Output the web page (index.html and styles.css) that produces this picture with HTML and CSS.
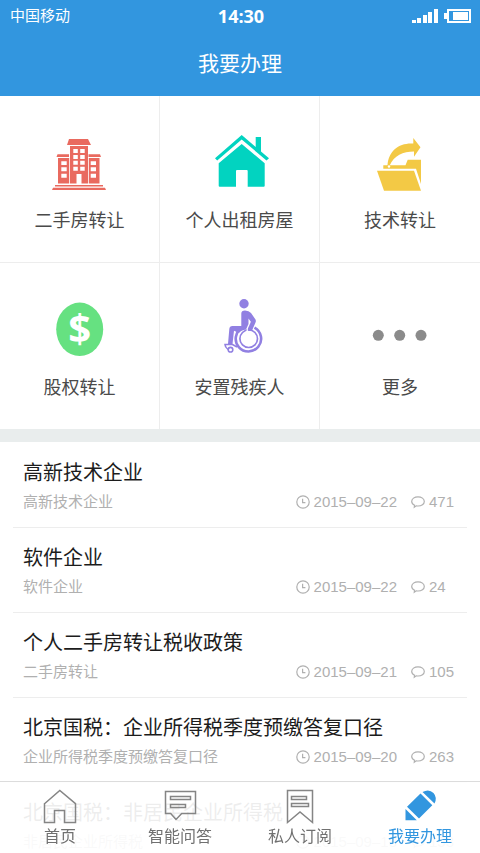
FILE: index.html
```html
<!DOCTYPE html>
<html lang="zh-CN">
<head>
<meta charset="utf-8">
<meta name="viewport" content="width=device-width, initial-scale=1">
<title>我要办理</title>
<link rel="stylesheet" href="styles.css">
</head>
<body>
<svg class="sprite" aria-hidden="true">
  <symbol id="clock" viewBox="0 0 14 14"><circle cx="7" cy="7" r="6.2"/><path d="M6.6 3.8V7.6H9.4"/></symbol>
  <symbol id="comment" viewBox="0 0 14 14"><path d="M3.6 10.2C1.8 9.4.7 8 .7 6.4.7 3.8 3.5 1.8 7 1.8s6.3 2 6.3 4.6S10.500 11 7 11c-.6 0-1.200-.1-1.700-.2L3.300 12.200Z"/></symbol>
</svg>
<header class="header">
  <div class="status">
    <span class="carrier">中国移动</span>
    <span class="time">14:30</span>
    <svg class="signal" viewBox="0 0 60 16" role="img" aria-label="信号与电量">
      <path fill="#fff" d="M0 12h4v3H0zM5 10h4v5H5zM11 7h4v8h-4zM16 4h4v11h-4zM22 1h4v14h-4z"/>
      <rect x="36" y="2" width="22" height="12" fill="none" stroke="#fff" stroke-width="2"/>
      <path fill="#fff" d="M32 5h3v6h-3zM41 4h15v8H41z"/>
    </svg>
  </div>
  <h1 class="page-title">我要办理</h1>
</header>
<main class="content">
  <nav class="services" aria-label="办理事项">
    <a class="service" href="#house-sale">
      <svg class="service-icon" viewBox="0 0 60 60" fill="#e96a5f">
        <path d="M19 5h19l3 6H17zM7.500 20.300H19V23H6.500zM38.500 20.300H50L51 23H38.500zM5 51h48v1.500H5zM3 53.800h52l1 2.200H2z"/>
        <path fill-rule="evenodd" d="M20 12h18v37.500h-6.500V40h-5v9.500H20zM23.300 15v4h4.500v-4zM30.200 15v4h4.500v-4zM23.300 21v4h4.500v-4zM30.200 21v4h4.500v-4zM23.300 26.700v4h4.500v-4zM30.200 26.700v4h4.500v-4zM23.300 32.700v4h4.500v-4zM30.200 32.700v4h4.500v-4zM8 24h11.200v25.500H8zM11.300 27.300V31h5.400v-3.700zM11.300 33.300v4h5.400v-4zM11.300 39.700v4h5.400v-4zM38.800 24h10.700v25.500H38.800zM40.700 27.300V31H46v-3.700zM40.700 33.300v4H46v-4zM40.700 39.700v4H46v-4z"/>
      </svg>
      <span>二手房转让</span>
    </a>
    <a class="service" href="#house-rent">
      <svg class="service-icon" viewBox="0 0 60 60" fill="#02d3c0">
        <path d="M5 24.300 31.700 1 45.700 13V3H51V17.500L59 24.300 56.500 26.500 31.700 5.500 7.200 26.500Z"/>
        <path d="M8.700 29.300 31.700 10 54.700 29.300V51.700q0 1-1 1H37.700V37q0-1-1-1H27q-1 0-1 1V52.700H9.700q-1 0-1-1Z"/>
      </svg>
      <span>个人出租房屋</span>
    </a>
    <a class="service" href="#technology">
      <svg class="service-icon" viewBox="0 0 60 60" fill="#f3c945">
        <path d="M7 36.700H44L51 56.700H14Z"/>
        <path d="M13.300 34.800V31.300H17.500C18.500 17 29 8.500 43.300 9.500V4L50.500 13.300 44 22.700V17.500C33 17.500 24 21.500 19.800 31.300H35.500L37.700 25.700H51V50L46 34.800Z"/>
        <circle cx="19" cy="32.500" r="1.200" fill="#fff"/>
      </svg>
      <span>技术转让</span>
    </a>
    <a class="service" href="#equity">
      <svg class="service-icon" viewBox="0 0 60 60">
        <ellipse cx="29.700" cy="28.300" rx="23.500" ry="26.700" fill="#66e181"/>
        <text class="dollar" x="29.700" y="42" text-anchor="middle">$</text>
      </svg>
      <span>股权转让</span>
    </a>
    <a class="service" href="#disabled">
      <svg class="service-icon" viewBox="0 0 60 60" fill="#9180e2">
        <circle cx="34" cy="2.700" r="4.700"/>
        <path d="M31.300 12.500Q31.300 9.500 35 9.500 39 9.500 41 12L45.500 18.500Q46.200 20 45.500 21.500L42 29.500H37.500L41 21 38.500 17.500V23L36 28.500Q31 29 29 32L24 29.800 22.500 43H18L19.300 28Q19.500 25 22.500 25H31.300Z"/>
        <g fill="none" stroke="#9180e2">
          <path stroke-width="2.600" d="M44.500 26.600A12.700 12.700 0 1 1 32 26.800"/>
          <circle cx="38.700" cy="37.700" r="8.800" stroke-width="1.700"/>
          <circle cx="20.500" cy="48.700" r="2.300" stroke-width="1.600"/>
          <path stroke-width="1.600" d="M18 48.500Q15 46 15 43.500H22.500L27 46"/>
        </g>
        <path fill="none" stroke="#fff" stroke-width="1.300" d="M41.200 21.500 36 32"/>
        <path fill="none" stroke="#9180e2" stroke-width="4" stroke-linecap="round" d="M43 21 39.800 28"/>
      </svg>
      <span>安置残疾人</span>
    </a>
    <a class="service" href="#more">
      <svg class="service-icon" viewBox="0 0 60 60" fill="#8b8b8b"><circle cx="8.300" cy="34.300" r="5.500"/><circle cx="29.700" cy="34.300" r="5.500"/><circle cx="51" cy="34.300" r="5.500"/></svg>
      <span>更多</span>
    </a>
  </nav>
  <ul class="articles">
    <li class="article">
      <h2><a href="#a1">高新技术企业</a></h2>
      <div class="meta"><span class="topic">高新技术企业</span><svg><use href="#clock"/></svg><time>2015–09–22</time><svg class="bubble"><use href="#comment"/></svg><span class="count">471</span></div>
    </li>
    <li class="article">
      <h2><a href="#a2">软件企业</a></h2>
      <div class="meta"><span class="topic">软件企业</span><svg><use href="#clock"/></svg><time>2015–09–22</time><svg class="bubble"><use href="#comment"/></svg><span class="count">24</span></div>
    </li>
    <li class="article">
      <h2><a href="#a3">个人二手房转让税收政策</a></h2>
      <div class="meta"><span class="topic">二手房转让</span><svg><use href="#clock"/></svg><time>2015–09–21</time><svg class="bubble"><use href="#comment"/></svg><span class="count">105</span></div>
    </li>
    <li class="article">
      <h2><a href="#a4">北京国税：企业所得税季度预缴答复口径</a></h2>
      <div class="meta"><span class="topic">企业所得税季度预缴答复口径</span><svg><use href="#clock"/></svg><time>2015–09–20</time><svg class="bubble"><use href="#comment"/></svg><span class="count">263</span></div>
    </li>
    <li class="article">
      <h2><a href="#a5">北京国税：非居民企业所得税</a></h2>
      <div class="meta"><span class="topic">非居民企业所得税</span><svg><use href="#clock"/></svg><time>2015–09–18</time><svg class="bubble"><use href="#comment"/></svg><span class="count">153</span></div>
    </li>
  </ul>
</main>
<nav class="tabs" aria-label="主导航">
  <a class="tab" href="#home">
    <svg viewBox="0 0 40 38"><path d="M4.500 15.700 19.800 2.500 35.500 15.700V34.500H24.500V22.500H14.500V34.500H4.500Z"/></svg>
    <span>首页</span>
  </a>
  <a class="tab" href="#ask">
    <svg viewBox="0 0 40 38"><path d="M5.500 3.500H35.500V25.500H21.700L16 31.500 10.700 25.500H5.500ZM10.500 8.500H30.500V11.500H10.500ZM10.500 16.500H25.500V19.500H10.500Z"/></svg>
    <span>智能问答</span>
  </a>
  <a class="tab" href="#subscriptions">
    <svg viewBox="0 0 40 38"><path d="M7.500 2.500H32.500V34.500L20 24 7.500 34.500ZM11.500 8.500H26.500V11.500H11.500ZM11.500 15.500H28.500V18.500H11.500Z"/></svg>
    <span>私人订阅</span>
  </a>
  <a class="tab active" href="#apply" aria-current="page">
    <svg viewBox="0 0 40 38"><path d="M22.500 4Q29 .5 33.500 5 37.500 9.500 34.500 15.500ZM20.500 5.500 32.300 17.300 19 30.500 7 18.700ZM5.500 21 16.800 32.300H5.500Z"/></svg>
    <span>我要办理</span>
  </a>
</nav>
</body>
</html>
```
FILE: styles.css
```css
* {
  box-sizing: border-box;
}

body {
  display: flex;
  flex-direction: column;
  height: 100vh;
  margin: 0;
  overflow: hidden;
  background: #fff;
  color: #1c1c1c;
  font-family: "Liberation Sans", "Noto Sans CJK SC", sans-serif;
}

a {
  color: inherit;
  text-decoration: none;
}

.sprite {
  display: none;
}

.header {
  flex: none;
  background: #3296df;
  color: #fff;
}

.status {
  display: grid;
  grid-template-columns: 1fr auto 1fr;
  align-items: center;
  height: 32px;
  padding: 0 8px 0 10px;
}

.carrier {
  font-size: 15px;
  line-height: 20px;
}

.time {
  font: bold 18px/20px "Open Sans", sans-serif;
}

.signal {
  justify-self: end;
  width: 60px;
  height: 16px;
}

.page-title {
  margin: 0;
  padding: 17px 0;
  font-size: 21px;
  font-weight: 400;
  line-height: 30px;
  text-align: center;
}

.content {
  flex: 1;
  min-height: 0;
  overflow-y: auto;
  scrollbar-width: none;
}

.services {
  display: grid;
  grid-template-columns: repeat(3, 1fr);
  border-bottom: 13px solid #e9eded;
}

.service {
  display: flex;
  flex-direction: column;
  align-items: center;
  gap: 13px;
  padding: 38px 0 27px;
  border-right: 1px solid #ededed;
  color: #4a4a4a;
  font-size: 18px;
  line-height: 28px;
}

.service:nth-child(3n) {
  border-right: 0;
}

.service:nth-child(-n+3) {
  border-bottom: 1px solid #ededed;
}

.service-icon {
  width: 60px;
  height: 60px;
  overflow: visible;
}

.dollar {
  fill: #fff;
  font: bold 40px "Open Sans", sans-serif;
}

.articles {
  margin: 0;
  padding: 0 13px 72px;
  list-style: none;
}

.article {
  padding: 15px 12px 15px 10px;
  border-bottom: 1px solid #ededed;
}

.article:first-child {
  padding-top: 16px;
}

.article h2 {
  margin: 0 0 4px;
  font-size: 20px;
  font-weight: 400;
  line-height: 30px;
}

.meta {
  display: flex;
  align-items: center;
  color: #b0b0b0;
  font-size: 15px;
  line-height: 20px;
}

.topic {
  flex: 1;
}

.meta svg {
  width: 14px;
  height: 14px;
  margin-right: 4px;
  fill: none;
  stroke: #b0b0b0;
  stroke-width: 1.2px;
}

.meta .bubble {
  margin-left: 14px;
}

.count {
  width: 26px;
}

.tabs {
  position: fixed;
  right: 0;
  bottom: 0;
  left: 0;
  display: grid;
  grid-template-columns: repeat(4, 1fr);
  padding: 6px 0;
  border-top: 1px solid #dcdcdc;
  background: rgba(255, 255, 255, 0.92);
}

.tab {
  display: flex;
  flex-direction: column;
  align-items: center;
  gap: 1px;
  color: #707070;
  font-size: 16px;
  line-height: 20px;
}

.tab svg {
  width: 40px;
  height: 38px;
  fill: none;
  stroke: #858585;
  stroke-width: 1.5px;
}

.tab.active {
  color: #3296df;
}

.tab.active svg {
  fill: #3296df;
  stroke: none;
}
```
